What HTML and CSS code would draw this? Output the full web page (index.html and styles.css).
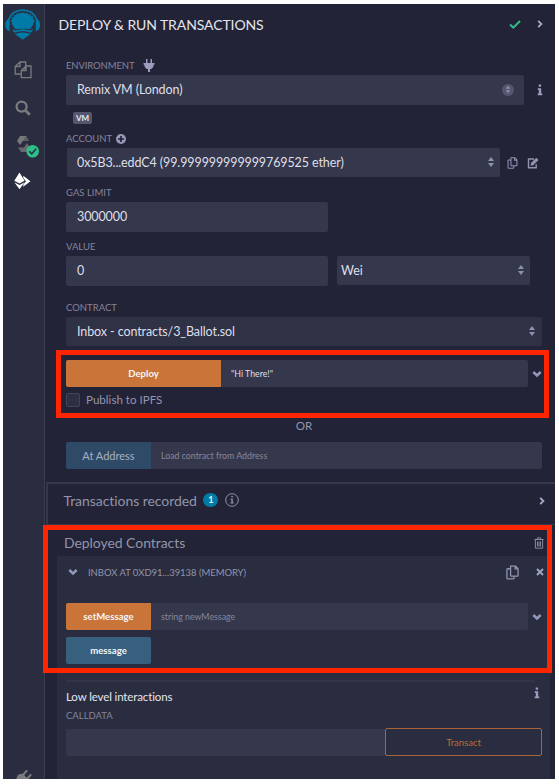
FILE: index.html
```
<!DOCTYPE html>
<html lang="en">
<head>
<meta charset="utf-8">
<title>Deploy &amp; Run Transactions</title>
<link rel="stylesheet" href="styles.css">
</head>
<body>
<svg class="defs" width="0" height="0" aria-hidden="true">
  <symbol id="sort" viewBox="0 0 8 12"><path d="M4 1 7 5H1zM4 11 1 7h6z" fill="currentColor"/></symbol>
  <symbol id="down" viewBox="0 0 10 8"><path d="M1.300 2 5 5.500 8.700 2" fill="none" stroke="currentColor" stroke-width="2.500"/></symbol>
  <symbol id="right" viewBox="0 0 6 8"><path d="M1.200 .8 4.400 4 1.200 7.200" fill="none" stroke="currentColor" stroke-width="1.800"/></symbol>
  <symbol id="info" viewBox="0 0 6 12"><path d="M1.700 .5h2.400v2.300H1.700zM.8 4.300h3.400v5.200H5.300V11.300H.7V9.500h1.100V6H.8z" fill="currentColor"/></symbol>
  <symbol id="copy" viewBox="0 0 12 14"><path d="M4.200 1h4.600L11.200 3.400v6.300q0 .6-.6.6H4.800q-.6 0-.6-.6zM8.500 1.200v2.500h2.500M4 3.500H1.500q-.7 0-.7.700v8q0 .8.800.8h5.200q.7 0 .7-.7v-1.800" fill="none" stroke="currentColor" stroke-width="1.200"/></symbol>
</svg>
<div class="app">
  <nav class="rail">
    <svg class="logo" viewBox="0 0 36 31">
      <path d="M3.500 11C6 4.500 11.500 1.200 17.700 1.200S29.500 4.500 32 11" fill="none" stroke="#007aa6" stroke-width="1.700"/>
      <path d="M4.700 9.200v13C1.700 21.500 .3 18.800 .3 15.700s1.400-5.700 4.400-6.500zM30.700 9.200v13c3-.7 4.400-3.400 4.400-6.500s-1.400-5.700-4.400-6.500z" fill="#007aa6"/>
      <ellipse cx="17.700" cy="12" rx="10.800" ry="7.800" fill="#007aa6"/>
      <ellipse cx="17.700" cy="12" rx="11" ry="8" fill="none" stroke="#007aa6" stroke-width="1.400" stroke-dasharray="2 1.200"/>
      <path d="M7.200 14.500Q9 19.500 11 20.300q6.700-2 13.400 0 2-.8 3.800-5.800V10h-21z" fill="#007aa6"/>
      <path d="M7.500 19.700l2.300 1.900q7.900-2.300 15.800 0l2.300-1.900-.6 2.800-1.900 1.200q-7.700-2.700-15.400 0L8.100 22.500z" fill="#007aa6"/>
      <path d="M8.700 24.300l1.800.6q7.200-2.800 14.400 0l1.800-.6L17.700 30.700z" fill="#007aa6"/>
    </svg>
    <svg class="files" viewBox="0 0 18 18"><path d="M6 5V1h5.700v5M6 1 1.200 5.500V13H7M1.500 5.500H6V1M11.500 5v4M12 5h5v11.700H7.300V9.500L12 5v4.500H7.500" fill="none" stroke="currentColor" stroke-width="1.300"/></svg>
    <svg class="search" viewBox="0 0 16 16"><circle cx="6.600" cy="6.600" r="5" fill="none" stroke="currentColor" stroke-width="2.300"/><path d="m10.300 10.300 4.500 4.500" stroke="currentColor" stroke-width="2.700"/></svg>
    <svg class="solidity" viewBox="0 0 24 24">
      <path d="M4 1h6L13 6H7L4 10 1 6z" fill="#77787b"/><path d="M10 1l3 5H7z" fill="#5d5e63"/>
      <path d="M11 8l3 4.500L11 17H5l-3-4.500h6z" fill="#67686c"/>
      <circle cx="16.700" cy="16.200" r="6.300" fill="#2fbd88"/><path d="m13.300 16.300 2.400 2.500 4.500-5" fill="none" stroke="#25344a" stroke-width="1.600"/>
    </svg>
    <svg class="eth" viewBox="0 0 18 18"><path d="M6.500.5 11.500 8.700 6.500 11.500 1.300 8.700zM1.300 10.200 6.500 13 11.500 10.200 6.500 17.300z" fill="#fff"/><path d="M10.300 3.800 17.400 9.300 10.300 14.700V12.500L13 9.300l-2.700-3.200z" fill="#fff"/></svg>
    <svg class="plugin" viewBox="0 0 16 16"><path d="M2 5Q5 3 7 4l6 6q0 4-4 5H5L1 12Q-.5 8 2 5z" fill="currentColor"/><path d="M7 5l3.500-4M11 9l3.600-4" stroke="currentColor" stroke-width="2" stroke-linecap="round"/></svg>
  </nav>
  <main class="panel">
    <header class="top">
      <h1>DEPLOY &amp; RUN TRANSACTIONS</h1>
      <svg class="tick" viewBox="0 0 12 9"><path d="m1 4.600 3.300 3L11 1" fill="none" stroke="currentColor" stroke-width="2"/></svg>
      <svg class="i-right"><use href="#right"/></svg>
    </header>

    <section class="form">
      <div class="label"><span class="env-label">ENVIRONMENT</span>
        <svg class="plug" viewBox="0 0 12 14"><path d="M3 0h1.500v4H3zM7.500 0H9v4H7.500zM.5 4h11v1.500h-.7Q10.500 9.500 7 10.300V13H5v-2.700Q1.500 9.500 1.200 5.500H.5z" fill="currentColor"/></svg>
      </div>
      <div class="line">
        <div class="field env"><span>Remix VM (London)</span><span class="knob"><svg class="i-sort"><use href="#sort"/></svg></span></div>
        <svg class="i-info env-info"><use href="#info"/></svg>
      </div>
      <div class="badge-row"><span class="badge">VM</span></div>
      <div class="label"><span>ACCOUNT</span>
        <svg class="plus" viewBox="0 0 10 10"><circle cx="5" cy="5" r="5" fill="currentColor"/><path d="M5 2v6M2 5h6" stroke="#222336" stroke-width="1.700"/></svg>
      </div>
      <div class="line">
        <div class="field account"><span>0x5B3...eddC4 (99.999999999999769525 ether)</span><svg class="i-sort"><use href="#sort"/></svg></div>
        <svg class="i-copy small"><use href="#copy"/></svg>
        <svg class="edit" viewBox="0 0 12 12"><path d="M7 2H1.500v8.700h7.700V7.200" fill="none" stroke="currentColor" stroke-width="1.400"/><path d="M3.600 8.700l.4-2.700L9.300.7 11.500 2.900 6.200 8.200z" fill="currentColor"/></svg>
      </div>
      <div class="label gas"><span>GAS LIMIT</span></div>
      <div class="field half"><span>3000000</span></div>
      <div class="label value"><span>VALUE</span></div>
      <div class="line split">
        <div class="field half"><span>0</span></div>
        <div class="field unit"><span>Wei</span><svg class="i-sort"><use href="#sort"/></svg></div>
      </div>
      <div class="label contract"><span>CONTRACT</span></div>
      <div class="field wide"><span>Inbox - contracts/3_Ballot.sol</span><svg class="i-sort"><use href="#sort"/></svg></div>
      <div class="action deploy">
        <button class="btn orange main">Deploy</button>
        <div class="arg filled">"Hi There!"</div>
        <svg class="i-down"><use href="#down"/></svg>
      </div>
      <div class="ipfs"><span class="box"></span><span>Publish to IPFS</span></div>
      <div class="or">OR</div>
      <div class="action at">
        <button class="btn muted">At Address</button>
        <div class="arg">Load contract from Address</div>
      </div>
    </section>

    <section class="recorded">
      <h2>Transactions recorded</h2>
      <span class="count">1</span>
      <svg class="circle-i" viewBox="0 0 14 14"><circle cx="7" cy="7" r="6.300" fill="none" stroke="currentColor" stroke-width="1"/><path d="M6.300 3h1.500v1.500H6.300zM5.500 5.700h2.300v3.800h1v1H5.400v-1h1V6.700h-.9z" fill="currentColor"/></svg>
      <svg class="i-right"><use href="#right"/></svg>
    </section>

    <section class="deployed">
      <div class="deployed-head">
        <h2>Deployed Contracts</h2>
        <svg class="trash" viewBox="0 0 10 12"><path d="M.5 2.500h9M3 2.300 3.600.8h2.800L7 2.300M1.400 2.500v8.700h7.200V2.500M3.500 4.500v5M5 4.500v5M6.500 4.500v5" fill="none" stroke="currentColor" stroke-width=".9"/></svg>
      </div>
      <div class="card">
        <div class="card-head">
          <svg class="i-down"><use href="#down"/></svg>
          <span>INBOX AT 0XD91...39138 (MEMORY)</span>
          <svg class="i-copy"><use href="#copy"/></svg>
          <svg class="close" viewBox="0 0 8 8"><path d="m1 1 6 6M7 1 1 7" stroke="currentColor" stroke-width="1.900"/></svg>
        </div>
        <div class="action">
          <button class="btn orange">setMessage</button>
          <div class="arg">string newMessage</div>
          <svg class="i-down"><use href="#down"/></svg>
        </div>
        <div class="action message"><button class="btn blue">message</button></div>
        <div class="rule"></div>
        <div class="low"><span>Low level interactions</span><svg class="i-info"><use href="#info"/></svg></div>
        <div class="label call"><span>CALLDATA</span></div>
        <div class="line"><div class="calldata"></div><button class="transact">Transact</button></div>
      </div>
    </section>
  </main>
  <div class="mark mark-deploy"></div>
  <div class="mark mark-contracts"></div>
</div>
</body>
</html>
```
FILE: styles.css
```
* { box-sizing: border-box; }
body { margin: 0; background: #fff; font-family: Lato, "Noto Sans", sans-serif; overflow: hidden; }
h1, h2 { margin: 0; font-weight: 400; }
button { font: inherit; border: 0; padding: 0; }
svg { display: block; flex: none; }
span { white-space: nowrap; }
.defs { position: absolute; }
.app { position: relative; display: flex; width: 552px; height: 775px; margin: 4px 0 0 3px; background: #222336; color: #9395ae; }

.rail { width: 42px; height: 775px; overflow: hidden; background: #2a2c3f; border-right: 1px solid #3b3d51; color: #7a7b7e; display: flex; flex-direction: column; }
.logo { width: 36px; height: 31px; margin: 5px 0 0 1.500px; }
.files { width: 18px; height: 18px; margin: 21px 0 0 11px; }
.search { width: 16px; height: 16px; margin: 21px 0 0 12px; }
.solidity { width: 24px; height: 24px; margin: 19px 0 0 13px; }
.eth { width: 18px; height: 18px; margin: 13px 0 0 10px; }
.plugin { width: 16px; height: 16px; margin: auto 0 -7px 13px; }

.panel { width: 510px; min-width: 0; }
.top { height: 42px; display: flex; align-items: center; padding: 0 12px 0 13.500px; color: #e4e5ee; }
.top h1 { font-size: 14px; line-height: 18px; letter-spacing: -.1px; }
.tick { width: 12px; height: 9px; margin: -2px 16px 0 auto; color: #32ba89; }
.i-right { width: 6px; height: 8px; color: #a9abc8; }
.top .i-right { margin-top: -3px; }
.form { padding: 11px 0 13px 21px; }
.label { height: 18px; line-height: 18px; font-size: 9.500px; color: #83859d; display: flex; align-items: center; }
.env-label { letter-spacing: -.12px; }
.line { display: flex; align-items: center; }
.field { height: 29px; background: #35384c; border-radius: 2px; display: flex; align-items: center; padding: 0 6px 1px 11px; font-size: 12.500px; letter-spacing: -.1px; color: #dedfe9; }
.field .i-sort { margin-left: auto; }
.i-sort { width: 8px; height: 12px; color: #8f91b0; }
.i-info { width: 6px; height: 12px; color: #9a9cc0; }
.i-copy { width: 13px; height: 15px; color: #9294b4; }
.i-down { width: 10px; height: 8px; color: #9597b9; }
.plug { width: 12px; height: 14px; margin: 0 0 0 9px; color: #9a9cc0; }
.plus { width: 10px; height: 10px; margin: -1px 0 0 4px; color: #9698b8; }
.env { width: 458px; height: 30px; padding-right: 10px; }
.knob { width: 12px; height: 12px; margin-left: auto; border-radius: 50%; background: #55576f; display: flex; align-items: center; justify-content: center; }
.knob .i-sort { width: 6px; height: 9px; margin: 0; }
.env-info { margin-left: 13px; }
.badge-row { height: 25px; padding: 7px 0 0 7px; display: flex; }
.badge { width: 19px; height: 12px; border-radius: 2px; background: #55576f; color: #e7e8f1; font-size: 8px; line-height: 12px; font-weight: 700; text-align: center; }
.account { width: 433px; margin-left: 1px; padding-left: 10px; padding-right: 5px; }
.i-copy.small { width: 11px; height: 12px; margin-left: 7px; }
.edit { width: 12px; height: 12px; margin-left: 9px; }
.gas { margin-top: 7px; }
.value { margin-top: 6px; }
.half { width: 262px; height: 30px; }
.split { gap: 9px; align-items: flex-start; }
.unit { width: 193px; padding-left: 4px; padding-right: 5px; }
.contract { margin-top: 13px; }
.wide { width: 476px; background: #2f3144; }

.action { display: flex; align-items: center; height: 27px; }
.action .i-down { margin-left: 4px; }
.deploy { margin-top: 14px; }
.btn { width: 85px; height: 27px; border-radius: 2px 0 0 2px; color: #f4f4f7; font-size: 9.600px; font-weight: 700; line-height: 27px; text-align: center; }
.main { width: 155px; }
.orange { background: #c97539; }
.muted { background: #2e4a66; color: #a7b0c1; font-size: 11px; font-weight: 400; }
.blue { background: #37607f; border-radius: 2px; }
.arg { flex: none; width: 377px; height: 27px; padding-left: 10px; background: #35384c; border-radius: 0 2px 2px 0; font-size: 8.800px; line-height: 27px; color: #85879b; }
.filled { width: 307px; color: #dedfe9; }
.card .arg { width: 377px; }
.at .arg { width: 391px; }
.ipfs { height: 14px; margin-top: 6px; display: flex; align-items: center; font-size: 11.600px; line-height: 14px; }
.box { width: 14px; height: 14px; margin-right: 6px; background: #2d2f43; border: 1px solid #42445a; border-radius: 2px; }
.or { width: 476px; height: 18px; margin: 10px 0 7px; text-align: center; font-size: 11.600px; line-height: 18px; }

.recorded { height: 43px; margin-left: 1px; border: solid #35374a; border-width: 2px 0 1px 2px; display: flex; align-items: center; padding: 0 10px 6px 15.500px; }
.recorded h2, .deployed h2 { font-size: 14px; line-height: 20px; letter-spacing: -.06px; color: #9294aa; }
.count { width: 15px; height: 14px; margin: -2px 0 0 6.500px; border-radius: 7px; background: #007aa6; color: #e9f4fa; font-size: 9px; line-height: 13px; font-weight: 700; text-align: center; }
.circle-i { width: 14px; height: 14px; margin: -3px 0 0 7px; }
.recorded .i-right { margin-left: auto; }
.deployed-head { height: 31px; padding: 5px 11px 0 19px; display: flex; align-items: center; justify-content: space-between; }
.trash { width: 10px; height: 12px; }
.card { width: 493px; height: 223px; margin-left: 12px; padding-left: 9px; background: #2a2c3f; }
.card-head { height: 47px; padding: 0 6px 15px 2px; display: flex; align-items: center; font-size: 9.500px; letter-spacing: -.04px; color: #9294ab; }
.card-head .i-down { margin-right: 10px; }
.card-head .i-copy { margin-left: auto; }
.close { width: 8px; height: 8px; margin: 0 0 0 17px; color: #a1a3c3; }
.message { margin-top: 7px; }
.rule { width: 468px; height: 2px; margin-top: 16px; background: #323448; }
.low { height: 26px; padding: 2px 10px 0 0; display: flex; align-items: center; justify-content: space-between; font-size: 11.500px; letter-spacing: -.13px; color: #e4e5ee; }
.low .i-info { margin-top: -6px; }
.calldata { width: 320px; height: 27px; background: #35384c; border-radius: 2px; }
.call { margin: -1px 0 3px; }
.transact { width: 157px; height: 28px; margin-left: -1px; border: 1px solid #a96439; border-radius: 2px; background: #2a2c3f; color: #bb6c38; font-size: 9.500px; text-align: center; }

.mark { position: absolute; border: 5px solid #fe2500; }
.mark-deploy { left: 53px; top: 346px; width: 493px; height: 68px; }
.mark-contracts { left: 40px; top: 521px; width: 509px; height: 148px; }
```
